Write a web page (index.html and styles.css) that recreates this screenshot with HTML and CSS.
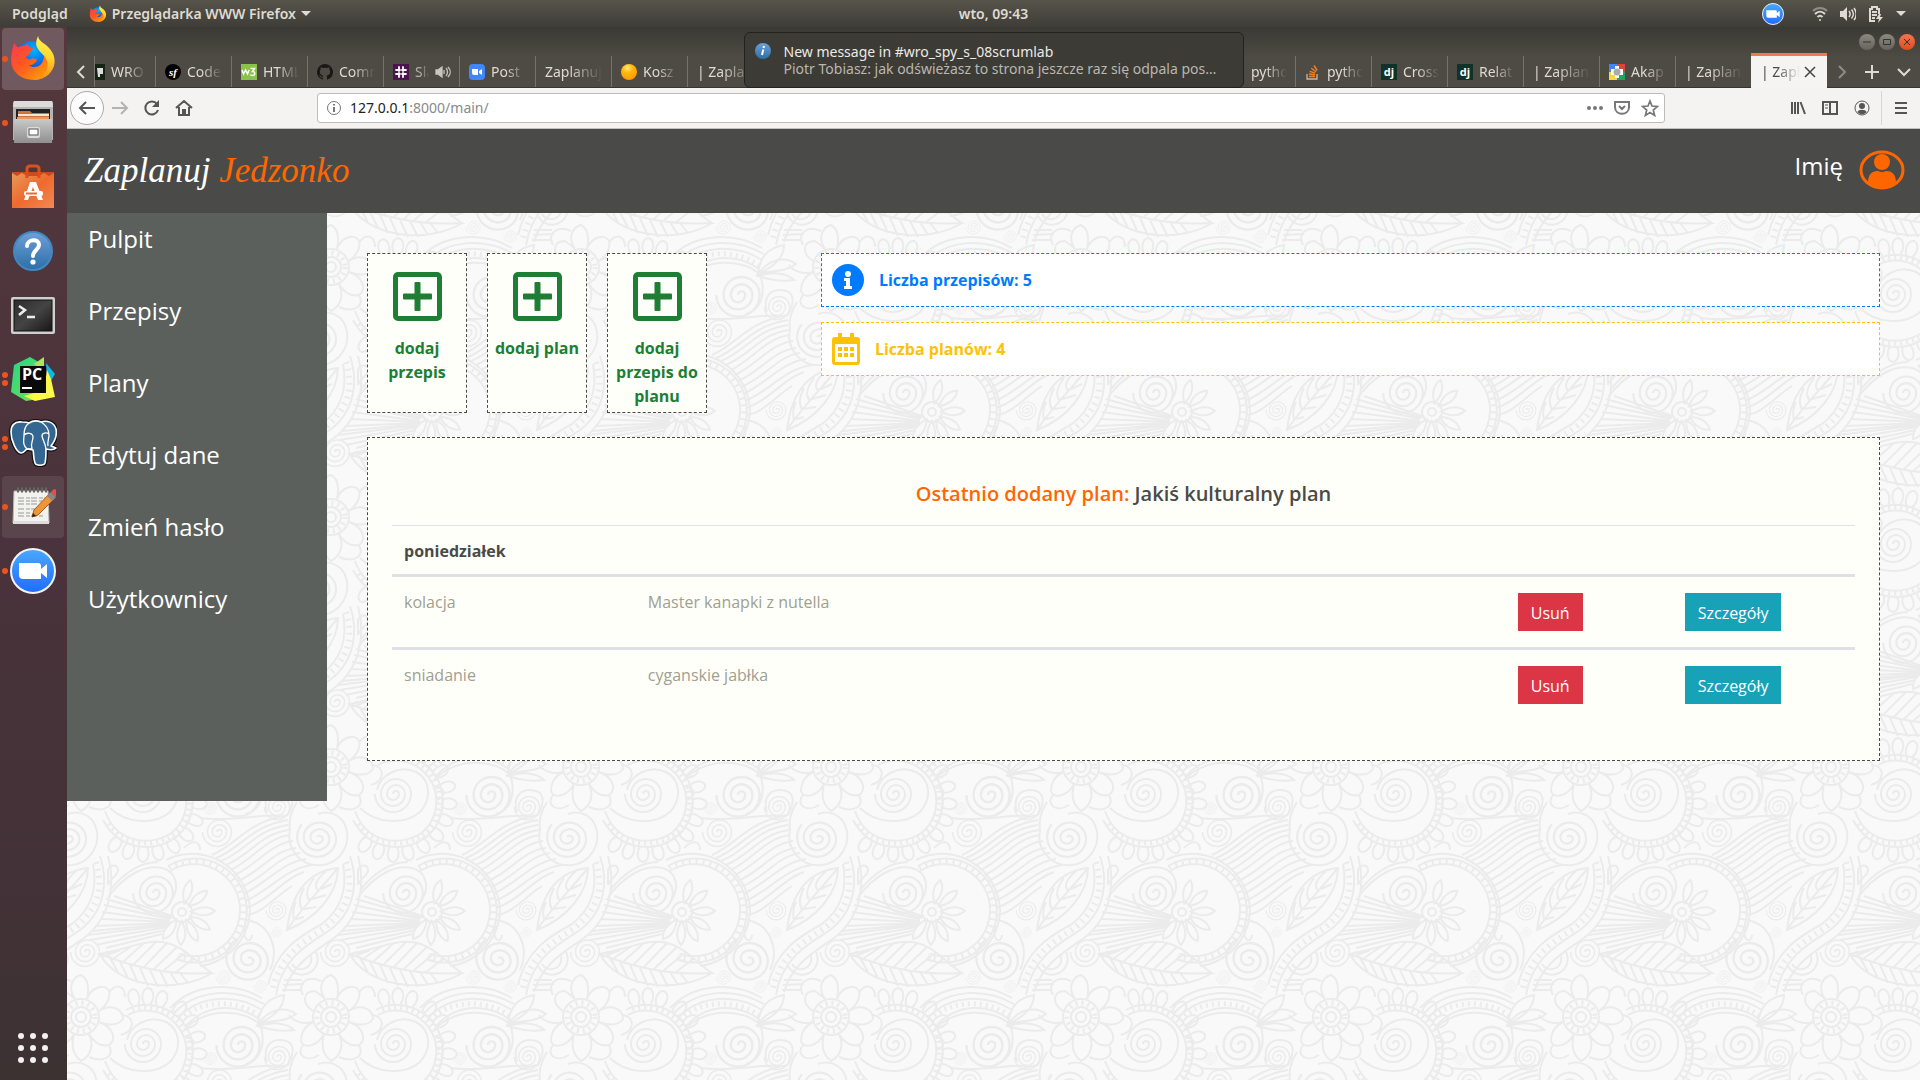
FILE: index.html
```html
<!DOCTYPE html>
<html lang="pl">
<head>
<meta charset="utf-8">
<title>Zaplanuj Jedzonko</title>
<link rel="stylesheet" href="styles.css">
</head>
<body>
<svg class="defs" aria-hidden="true">
  <defs>
    <linearGradient id="g-fox" x1="0" y1="0" x2="1" y2="1"><stop offset="0" stop-color="#ff3750"/><stop offset=".45" stop-color="#ff5a1f"/><stop offset="1" stop-color="#ffb400"/></linearGradient>
    <linearGradient id="g-fox2" x1="0" y1="0" x2="0" y2="1"><stop offset="0" stop-color="#fff44f"/><stop offset=".5" stop-color="#ffd52e"/><stop offset="1" stop-color="#ff8a16"/></linearGradient>
    <radialGradient id="g-globe" cx=".55" cy=".25" r=".8"><stop offset="0" stop-color="#00b4ff"/><stop offset=".5" stop-color="#0a6be8"/><stop offset="1" stop-color="#2a1a8c"/></radialGradient>
    <linearGradient id="g-blue" x1="0" y1="0" x2="0" y2="1"><stop offset="0" stop-color="#4aa8ff"/><stop offset="1" stop-color="#1f6dfb"/></linearGradient>
    <linearGradient id="g-help" x1="0" y1="0" x2="0" y2="1"><stop offset="0" stop-color="#6f9fd8"/><stop offset="1" stop-color="#2c6fa6"/></linearGradient>
    <linearGradient id="g-grey" x1="0" y1="0" x2="0" y2="1"><stop offset="0" stop-color="#c9c9c9"/><stop offset="1" stop-color="#8f8f8f"/></linearGradient>
    <linearGradient id="g-bag" x1="0" y1="0" x2="1" y2="1"><stop offset="0" stop-color="#e79a5c"/><stop offset=".5" stop-color="#ef6a2d"/><stop offset="1" stop-color="#f08a54"/></linearGradient>
    <linearGradient id="g-term" x1="0" y1="0" x2="1" y2="1"><stop offset="0" stop-color="#2c2c2c"/><stop offset=".5" stop-color="#444"/><stop offset="1" stop-color="#161616"/></linearGradient>
    <linearGradient id="g-pc" x1="0" y1="0" x2="1" y2="1"><stop offset="0" stop-color="#21d789"/><stop offset="1" stop-color="#7be04b"/></linearGradient>
    <radialGradient id="g-egg" cx=".4" cy=".25" r=".8"><stop offset="0" stop-color="#ffe97a"/><stop offset=".4" stop-color="#ffb80a"/><stop offset="1" stop-color="#ff9500"/></radialGradient>

    <symbol id="firefox" viewBox="0 0 46 46">
      <circle cx="22" cy="23" r="17" fill="url(#g-globe)"/>
      <path fill="url(#g-fox)" d="M5 7c1 3 2 4 4 5 3-2 6-1 9-4 0 3 2 5 6 5-2 2-4 3-4 5l-4 3c1 2 3 3 5 2 3-1 5 0 6 1-2 3-4 5-8 5 4 3 10 2 13-3 3-6 1-12-2-15 8 2 15 10 12 19-3 9-11 14-20 13C10 42 2 35 2 24 2 16 4 12 5 7z"/>
      <path fill="url(#g-fox2)" d="M28 1c0 4 4 6 8 9 7 6 9 13 7 20-3 9-11 13-19 13 8-2 14-8 13-16-1-8-10-11-11-18 0-4 1-6 2-8z"/>
    </symbol>
    <symbol id="zoomcam" viewBox="0 0 46 46">
      <circle cx="23" cy="23" r="22" fill="url(#g-blue)" stroke="#f4f4f4" stroke-width="2"/>
      <path fill="#fff" d="M9 15h19a3 3 0 0 1 3 3v13H13a4 4 0 0 1-4-4zM31 21l6-5v14l-6-5z"/>
    </symbol>
    <symbol id="plus-square" viewBox="0 0 49 49">
      <path fill="none" stroke="#1e7e34" stroke-width="5" d="M5 2.500h39a2.500 2.500 0 0 1 2.500 2.500v39a2.500 2.500 0 0 1-2.500 2.500H5A2.500 2.500 0 0 1 2.500 44V5A2.500 2.500 0 0 1 5 2.500z"/>
      <rect x="10" y="21.500" width="29" height="6" rx="1" fill="#1e7e34"/>
      <rect x="21.500" y="10" width="6" height="29" rx="1" fill="#1e7e34"/>
    </symbol>
    <symbol id="dj" viewBox="0 0 16 16"><rect width="16" height="16" fill="#113228"/><text x="8" y="12" text-anchor="middle" class="glyph glyph-dj">dj</text></symbol>

    <path id="spiral" d="M0 0A3 3 0 0 1 6 0A6 6 0 0 1-6 0A9 9 0 0 1 12 0A12 12 0 0 1-12 0A15 15 0 0 1 18 0A18 18 0 0 1-18 0"/>
    <path id="petal" d="M0-9C-5-18-6-26 0-33C6-26 5-18 0-9z"/>
    <path id="lobe" d="M-3-46C-7-52-6-61 0-62C6-61 7-52 3-46"/>
    <g id="floral" fill="none" stroke="#ebebeb" stroke-width="2">
      <!-- flower inside a beaded ring -->
      <path d="M218 86A52 52 0 1 1 226 179M220 91A46 46 0 1 1 230 174M216 80A58 58 0 0 1 300 132A58 58 0 0 1 250 186"/>
      <path stroke-width="6" stroke-dasharray="2 5" d="M219 88A49 49 0 1 1 228 176"/>
      <g transform="translate(232 132)">
        <circle r="4"/><circle r="10"/>
        <use href="#petal" transform="rotate(15)"/><use href="#petal" transform="rotate(50)"/><use href="#petal" transform="rotate(88)"/><use href="#petal" transform="rotate(122)"/><use href="#petal" transform="rotate(152)"/><use href="#petal" transform="rotate(182)"/><use href="#petal" transform="rotate(215)"/>
      </g>
      <!-- shell with beads and lobes -->
      <path d="M155 31C165 60 195 68 220 54A41 41 0 0 0 225-7C210-22 190-22 178-15M153 40C170 72 205 72 225 58A47 47 0 0 0 231-10C214-28 190-28 176-20M160 28C176 44 205 45 220 32C234 16 228-2 216-8C198-16 180-4 177 10"/>
      <path stroke-width="5" stroke-dasharray="2 4" d="M158 44C178 68 205 66 222 56A44 44 0 0 0 228-9C212-25 192-25 180-19"/>
      <g transform="translate(195 20)">
        <use href="#lobe" transform="rotate(-12)"/><use href="#lobe" transform="rotate(3)"/><use href="#lobe" transform="rotate(18)"/><use href="#lobe" transform="rotate(40)"/><use href="#lobe" transform="rotate(58)"/><use href="#lobe" transform="rotate(76)"/><use href="#lobe" transform="rotate(94)"/><use href="#lobe" transform="rotate(112)"/><use href="#lobe" transform="rotate(130)"/><use href="#lobe" transform="rotate(148)"/><use href="#lobe" transform="rotate(166)"/><use href="#lobe" transform="rotate(182)"/><use href="#lobe" transform="rotate(198)"/><use href="#lobe" transform="rotate(214)"/>
      </g>
      <!-- spirals -->
      <use href="#spiral" transform="translate(193 14)"/>
      <use href="#spiral" transform="translate(38 15) scale(1.200)"/>
      <use href="#spiral" transform="translate(77 27) scale(.7)"/>
      <use href="#spiral" transform="translate(117 57) rotate(40) scale(1.100)"/>
      <path d="M90 50A29 29 0 1 0 145 45C140 34 128 30 118 34M88 35C96 20 94 10 80 10C68 10 63 20 67 32M90 50C88 40 92 30 97 22"/>
      <use href="#spiral" transform="translate(17 52) scale(.8)"/>
      <use href="#spiral" transform="translate(203 113) scale(1.100)"/>
      <path d="M158 117C175 95 195 84 212 88C228 92 230 110 220 122M160 110C175 92 190 82 208 82M158 90C160 84 168 84 168 90C168 96 160 98 158 105z"/>
      <use href="#spiral" transform="translate(48 178) rotate(60) scale(1.200)"/>
      <path d="M45 140C70 142 80 170 70 190M46 146C40 160 52 165 52 155"/>
      <use href="#spiral" transform="translate(135 172) scale(.8)"/>
      <use href="#spiral" transform="translate(76 130) scale(.55)"/>
      <use href="#spiral" transform="translate(23 197) scale(.4)"/>
      <use href="#spiral" transform="translate(60 206) scale(.35)"/>
      <use href="#spiral" transform="translate(10 28) scale(.35)"/>
      <use href="#spiral" transform="translate(76 152) scale(.3)"/>
      <!-- flowing stripes -->
      <path d="M12 75C38 64 46 42 88 35M16 78C42 68 50 46 88 40M21 81C48 70 54 50 88 45M26 85C52 74 60 54 89 50M31 90C54 78 66 58 90 55M35 95C58 84 70 64 93 61M38 101C60 92 74 70 96 68M41 107C64 98 78 76 100 73M43 114C66 104 82 82 106 79M45 121C68 112 86 88 112 85M46 128C70 120 84 98 104 92M46 135C62 134 76 116 92 106"/>
      <!-- veined leaf -->
      <path d="M87 150C90 125 100 92 138 88C138 112 118 138 87 150zM87 150C100 130 120 110 138 88M94 140C92 132 94 126 96 122M102 130C98 122 100 116 104 108M110 121C104 114 108 106 114 98M119 111C112 106 118 98 126 91M96 139L104 137M104 129L116 127M112 119L126 115M121 109L132 104"/>
      <!-- beaded stem -->
      <path d="M150 76C158 100 156 130 130 150C108 164 82 178 76 215M158 76C166 106 160 138 134 158C114 172 92 184 84 212M143 84C148 110 140 130 122 144C100 156 76 170 68 205"/>
      <path stroke-width="6" stroke-dasharray="2 5" d="M146 82C154 108 148 128 126 147C104 162 80 174 72 212"/>
      <!-- fan -->
      <path d="M222 138L156 119M220 139L154 125M220 141L152 132M220 142L150 139M220 143L146 146M220 144L142 151M220 145L138 155M218 147L140 160M216 150L146 165M212 154L156 168M222 136L164 116"/>
      <!-- large leaf -->
      <path d="M150 174C180 168 195 160 212 162C235 165 248 185 262 193C220 196 180 186 150 174zM150 174C165 205 225 216 262 193M156 171L164 184M170 170L155 176M182 166L164 178M194 163L174 181M206 162L184 184M217 163L194 187M227 167L204 189M235 173L214 190M243 179L226 192M160 178L168 192M170 182L178 198M180 185L188 203M190 188L198 206M200 190L208 207M210 191L218 207M220 192L228 205M230 193L238 203"/>
      <!-- rosette -->
      <g transform="translate(131 237)">
        <circle r="5"/><circle r="10"/><circle r="18"/><circle r="14" stroke-width="5" stroke-dasharray="2 4"/>
        <path d="M-18-6C-30-14-28-26-16-26C-10-22-8-20-6-18M-6-18C-14-30-8-40 0-42C8-38 8-28 6-18M6-18C10-30 24-34 28-26C30-18 24-10 18-6M18-6C30-14 42-8 42 2C36 10 26 8 18 5M18 5C32 10 36 22 28 28C18 30 12 24 8 17M8 17C14 30 8 40 0 44C-8 38-10 28-7 17M-7 17C-14 30-28 32-30 24C-30 14-24 8-18 5M-18 5C-28 8-38 4-42-2M-28-22C-34-34-24-42-10-36M28-24C34-34 44-32 44-20M42-2C54 0 54 14 40 18M28 28C34 40 22 46 8 40M-28 28C-36 38-24 46-12 38"/>
      </g>
      <!-- arches -->
      <path d="M-30 228C-5 202 35 202 62 218M-26 233C-2 208 36 208 64 224M-22 238C0 214 36 214 62 230M-16 250C5 228 40 228 60 244C66 262 62 280 46 284M-14 246C8 222 40 224 60 240"/>
      <path stroke-width="5" stroke-dasharray="2 4" d="M-20 240C2 218 38 220 60 236"/>
      <path d="M58 244C60 226 68 218 84 215C84 226 76 236 58 244zM58 244C70 228 86 226 96 234C86 242 74 240 58 244zM58 246C70 242 86 242 94 250C82 252 70 250 58 246zM84 200L102 200M83 205L104 204M82 210L102 210M88 186A14 14 0 0 0 116 172M92 184A9 9 0 0 0 110 174"/>
      <path d="M0 38C30 42 60 34 78 36M234 68C242 60 250 60 250 70M-14 8C-4 6-4 18-14 20"/>
    </g>
    <pattern id="paisley" width="250" height="250" patternUnits="userSpaceOnUse" patternTransform="translate(133 151)">
      <use href="#floral" x="-250" y="-250"/><use href="#floral" y="-250"/><use href="#floral" x="-250"/><use href="#floral"/><use href="#floral" x="250"/><use href="#floral" y="250"/>
    </pattern>
  </defs>
</svg>

<header class="topbar">
  <div class="topbar-left">
    <span>Podgląd</span>
    <span class="app-menu"><svg width="18" height="18"><use href="#firefox"/></svg>Przeglądarka WWW Firefox<i class="caret"></i></span>
  </div>
  <time class="clock">wto, 09:43</time>
  <div class="tray">
    <svg class="tray-zoom" width="22" height="22"><use href="#zoomcam"/></svg>
    <svg width="16" height="16" viewBox="0 0 16 16" fill="none" stroke="#dfdbd2" stroke-width="2"><path opacity=".45" d="M1 5c4-4 10-4 14 0"/><path d="M3 8c3-3 7-3 10 0M5.500 11c1.500-1.500 3.500-1.500 5 0"/><circle cx="8" cy="14" r="1" fill="#dfdbd2" stroke="none"/></svg>
    <svg width="16" height="16" viewBox="0 0 16 16" fill="none" stroke="#dfdbd2" stroke-width="1.500"><path fill="#dfdbd2" stroke="none" d="M0 5h3l4-4v14l-4-4H0z"/><path d="M9 5c1.500 2 1.500 4 0 6M11.500 3.500c2.500 3 2.500 6 0 9M14 2c3 4 3 8 0 12"/></svg>
    <svg width="16" height="18" viewBox="0 0 16 18"><path fill="none" stroke="#dfdbd2" stroke-width="2" d="M7 16H2V4h2V2h5v2h2v5M4 7h5M4 10h5M4 13h3"/><path fill="#dfdbd2" d="M11 9l-3 5h3l-1 4 5-6h-3l1-3z"/></svg>
    <i class="caret"></i>
  </div>
</header>

<div class="desktop">
  <nav class="launcher" aria-label="Programy">
    <button class="launch running focused" aria-label="Firefox"><i class="pips"></i><svg width="48" height="48"><use href="#firefox"/></svg></button>
    <button class="launch running" aria-label="Pliki"><i class="pips"></i>
      <svg width="46" height="46" viewBox="0 0 46 46"><path fill="#b5b5b5" d="M3 3q0-2 2-2h36q2 0 2 2v37H3z"/><path fill="#dcdcdc" d="M4 1h38l1 6H3z"/><path fill="#222" d="M6 9h34v11H6z"/><path fill="#c9733d" d="M8 11h12l2 2h17v7H8z"/><path fill="#f6e7d5" d="M8 14h31v2H8z"/><path fill="#e89a58" d="M7 17h32v3H7z"/><path fill="url(#g-grey)" d="M4 19h38v24H4z"/><rect x="17" y="27" width="13" height="11" rx="2" fill="#ddd"/><rect x="19" y="29" width="9" height="6" fill="#fff" stroke="#555"/></svg></button>
    <button class="launch" aria-label="Oprogramowanie">
      <svg width="46" height="46" viewBox="0 0 46 46"><path fill="#c94b1e" d="M2 8h42v7H2z"/><path fill="url(#g-bag)" d="M2 9l5 3 5-3 5 3h12l5-3 5 3 5-3v35H2z"/><path fill="none" stroke="#d9501f" stroke-width="3" d="M17 14V5q0-3 3-3h6q3 0 3 3v9"/><path fill="#fff" d="M20 18h6l7 18h-5l-5-13-5 13h-4z"/><rect x="14" y="27" width="19" height="5" rx="2" fill="#fff"/><path stroke="#ea6a2f" stroke-width="2" d="M16 29.500h11"/></svg></button>
    <button class="launch" aria-label="Pomoc">
      <svg width="46" height="46" viewBox="0 0 46 46"><circle cx="23" cy="23" r="19" fill="url(#g-help)" stroke="#4187c0" stroke-width="2"/><path fill="none" stroke="#fff" stroke-width="4" stroke-linecap="round" d="M17 18c0-7 12-8 12-1 0 5-6 5-6 11"/><circle cx="23" cy="34" r="2.600" fill="#fff"/></svg></button>
    <button class="launch" aria-label="Terminal">
      <svg width="46" height="46" viewBox="0 0 46 46"><rect x="1" y="5" width="44" height="37" rx="2" fill="#cfcfcf"/><rect x="4" y="8" width="38" height="31" fill="url(#g-term)" stroke="#111"/><path fill="none" stroke="#eee" stroke-width="2.500" d="M9 14l6 4-6 5M17 25h8"/></svg></button>
    <button class="launch running double" aria-label="PyCharm"><i class="pips"></i><i class="pips"></i>
      <svg width="46" height="46" viewBox="0 0 46 46"><path fill="url(#g-pc)" d="M4 9L20 1l12 7 2 34-18 3L1 36z"/><path fill="#a6e85a" d="M24 8L34 1v14z"/><path fill="#0cb8e8" d="M36 7l9 11-7 12z"/><path fill="#fcf84a" d="M37 14l4 9 4 18-20 4-11-5 20-6z"/><path fill="#0a0a0a" d="M10 10h26v27H10z"/><text x="12" y="24" class="glyph glyph-pc">PC</text><path fill="#fff" d="M12 31h10v2H12z"/></svg></button>
    <button class="launch running double" aria-label="PostgreSQL"><i class="pips"></i><i class="pips"></i>
      <svg width="48" height="48" viewBox="0 0 48 48" stroke-linejoin="round">
        <path id="elephant" fill="#336791" stroke="#111" stroke-width="4" d="M13 3C5 2 2 7 2 13c0 8 5 20 10 21 3 0 4-3 6-4l6 1c1 3 0 8 2 13 1 3 9 3 10 0 1-4 1-9 1-14 4 1 8 1 10-1l-5-2c4-5 6-12 5-17C45 3 38 1 32 3c-5-2-9-1-12 1-2-1-4-1-7-1z"/>
        <path fill="#336791" stroke="#fff" stroke-width="1.600" d="M13 3C5 2 2 7 2 13c0 8 5 20 10 21 3 0 4-3 6-4l6 1c1 3 0 8 2 13 1 3 9 3 10 0 1-4 1-9 1-14 4 1 8 1 10-1l-5-2c4-5 6-12 5-17C45 3 38 1 32 3c-5-2-9-1-12 1-2-1-4-1-7-1z"/>
        <path fill="none" stroke="#fff" stroke-width="1.300" d="M20 4c-4 3-5 8-5 12 0 5-2 9 3 14M15 16c3-3 9-2 9 2 0 5-3 6-1 12h-6M32 3c5 3 8 8 8 13 0 4-2 7-1 11M40 15c-3-2-7-1-7 2 1 5 3 6 4 13"/></svg></button>
    <button class="launch running selected" aria-label="Edytor tekstu"><i class="pips"></i>
      <svg width="46" height="46" viewBox="0 0 46 46"><path fill="#f2f2ef" stroke="#b9b9b4" d="M4 7h34l1 32H3z"/><path fill="#ddd" d="M3 37h36v3H3z"/><path stroke="#666" stroke-width="5" stroke-dasharray="2 2" d="M7 6h30"/><path stroke="#999" stroke-dasharray="6 2 4 1" d="M8 14h27M8 17h24M8 20h20M8 25h22M8 29h13M8 32h25"/><path fill="#f0943a" stroke="#a85d1c" d="M22 33l2-7L40 9l5 5-17 17z"/><path fill="#888" d="M37 12l4-4 5 5-4 4z"/><path fill="#e05050" d="M41 8l3-3q5 1 4 6l-3 2z"/><path fill="#222" d="M22 33l1-4 3 3z"/></svg></button>
    <button class="launch running" aria-label="Zoom"><i class="pips"></i><svg width="46" height="46"><use href="#zoomcam"/></svg></button>
    <button class="launch apps" aria-label="Pokaż programy">
      <svg width="30" height="30" viewBox="0 0 30 30" fill="#f2f1f0"><circle cx="3" cy="3" r="3"/><circle cx="15" cy="3" r="3"/><circle cx="27" cy="3" r="3"/><circle cx="3" cy="15" r="3"/><circle cx="15" cy="15" r="3"/><circle cx="27" cy="15" r="3"/><circle cx="3" cy="27" r="3"/><circle cx="15" cy="27" r="3"/><circle cx="27" cy="27" r="3"/></svg></button>
  </nav>

  <div class="window">
    <div class="titlebar">
      <button class="wm" aria-label="Minimalizuj"><svg width="16" height="16"><path d="M4 8h8"/></svg></button>
      <button class="wm" aria-label="Przywróć"><svg width="16" height="16"><path d="M4.500 5.500h7v5h-7z"/></svg></button>
      <button class="wm wm-close" aria-label="Zamknij"><svg width="16" height="16"><path d="M5 5l6 6M11 5l-6 6"/></svg></button>
    </div>
    <div class="tabstrip">
      <button class="strip-btn" aria-label="W lewo"><svg width="16" height="16" viewBox="0 0 16 16"><path d="M11 2L5 8l6 6"/></svg></button>
      <button class="tab tab-cut"><svg width="10" height="16" viewBox="0 0 10 16"><path fill="#152515" d="M0 0h10v16H0z"/><path fill="#ddd" d="M2 4h6v6H5v3H3z"/></svg><span>WRO</span></button>
      <button class="tab"><svg width="16" height="16" viewBox="0 0 16 16"><circle cx="8" cy="8" r="8" fill="#000"/><text x="8" y="12" text-anchor="middle" class="glyph glyph-sf">sf</text></svg><span>Code</span></button>
      <button class="tab"><svg width="16" height="16" viewBox="0 0 16 16"><rect width="16" height="16" fill="#8bc34a"/><path fill="none" stroke="#fff" stroke-width="1.500" d="M1 6l1.500 4 2-4 2 4L8 6M9.500 4.500h4l-2 3c3 0 3 4 0 4-1 0-2-.5-2-1"/></svg><span>HTML</span></button>
      <button class="tab"><svg width="16" height="16" viewBox="0 0 16 16"><path fill="#191717" d="M8 0a8 8 0 0 0-2.500 15.600c.4 0 .5-.2.500-.4v-1.500c-2.200.5-2.700-1-2.700-1-.4-.9-.9-1.200-.9-1.200-.7-.5 0-.5 0-.5.8.1 1.200.8 1.200.8.8 1.300 2 .9 2.400.7 0-.5.300-.9.500-1.100-1.800-.2-3.600-.9-3.600-4 0-.8.300-1.600.8-2.100 0-.2-.3-1 .1-2.100 0 0 .7-.2 2.200.8a7 7 0 0 1 4 0c1.500-1 2.200-.8 2.200-.8.4 1.100.1 1.900.1 2.100.5.500.8 1.300.8 2.100 0 3.100-1.900 3.800-3.700 4 .3.300.6.800.6 1.500v2.300c0 .2.100.4.500.4A8 8 0 0 0 8 0z"/></svg><span>Comm</span></button>
      <button class="tab"><svg width="16" height="16" viewBox="0 0 16 16"><rect width="16" height="16" fill="#4a154b"/><path stroke="#fff" stroke-width="1.800" stroke-linecap="round" d="M6 3v4M3 6h4M10 3v4M9 6h4M6 9v4M3 10h4M10 9v4M9 10h4"/></svg><span class="dim">Sla</span><svg width="16" height="16" viewBox="0 0 16 16" fill="none" stroke="#c8c6c0" stroke-width="1.300"><path fill="#c8c6c0" d="M1 6h2l4-3v10l-4-3H1z"/><path d="M9 6v4M11 4c2 2 2 6 0 8M13 3c3 3 3 7 0 10"/></svg></button>
      <button class="tab"><svg width="16" height="16" viewBox="0 0 16 16"><rect width="16" height="16" rx="4" fill="#4087fc"/><path fill="#fff" d="M3 5h6v6H5q-2 0-2-2zM10 7l3-2v6l-3-2z"/></svg><span>Post</span></button>
      <button class="tab"><span>Zaplanuj</span></button>
      <button class="tab"><svg width="16" height="16" viewBox="0 0 16 16"><circle cx="8" cy="8" r="8" fill="url(#g-egg)"/></svg><span>Kosz</span></button>
      <button class="tab"><span>| Zaplanuj</span></button>
      <div class="tab-gap"></div>
      <button class="tab tab-text"><span>pytho</span></button>
      <button class="tab"><svg width="16" height="16" viewBox="0 0 16 16" fill="none"><path stroke="#bcbbbb" stroke-width="1.300" d="M2 10v5h10v-5"/><path stroke="#f48024" stroke-width="1.400" d="M4 12.500h6M4 10l6 .8M4.700 7.300l5.600 1.900M6.300 4.200l4.800 3.500M9 1.500l3.200 5"/></svg><span>pytho</span></button>
      <button class="tab"><svg width="16" height="16"><use href="#dj"/></svg><span>Cross</span></button>
      <button class="tab"><svg width="16" height="16"><use href="#dj"/></svg><span>Relat</span></button>
      <button class="tab"><span>| Zaplanuj</span></button>
      <button class="tab"><svg width="16" height="16" viewBox="0 0 16 16"><path fill="#4285f4" d="M0 0h8v8H0z"/><path fill="#db4437" d="M8 0h8v8H8z"/><path fill="#f4d93b" d="M0 8h8v8H0z"/><path fill="#1fa463" d="M8 8h8v8H8z"/><path fill="#fff" d="M6 2h4v3h4v6h-4v3H6v-3H2V5h4z"/><circle cx="8" cy="8" r="3.500" fill="#aaa"/></svg><span>Akap</span></button>
      <button class="tab"><span>| Zaplanuj</span></button>
      <button class="tab tab-active"><span>| Zapla</span><svg width="16" height="16" viewBox="0 0 16 16"><path stroke="#4a4a4a" stroke-width="1.600" d="M3 3l10 10M13 3L3 13"/></svg></button>
      <button class="strip-btn faint" aria-label="W prawo"><svg width="16" height="16" viewBox="0 0 16 16"><path d="M5 2l6 6-6 6"/></svg></button>
      <button class="strip-btn" aria-label="Nowa karta"><svg width="16" height="16" viewBox="0 0 16 16"><path d="M8 1v14M1 8h14"/></svg></button>
      <button class="strip-btn" aria-label="Lista kart"><svg width="16" height="16" viewBox="0 0 16 16"><path d="M2 5l6 6 6-6"/></svg></button>
    </div>
    <div class="navbar">
      <div class="nav-left">
        <button class="nav-btn back" aria-label="Wstecz"><svg width="18" height="18" viewBox="0 0 18 18"><path d="M17 9H2M8 3L2 9l6 6"/></svg></button>
        <button class="nav-btn off" aria-label="Naprzód"><svg width="18" height="18" viewBox="0 0 18 18"><path d="M1 9h15M10 3l6 6-6 6"/></svg></button>
        <button class="nav-btn" aria-label="Odśwież"><svg width="18" height="18" viewBox="0 0 18 18"><path d="M14 5a6.500 6.500 0 1 0 1 6"/><path class="solid" d="M16 1v7H9z"/></svg></button>
        <button class="nav-btn" aria-label="Strona domowa"><svg width="18" height="18" viewBox="0 0 18 18"><path d="M1 9l8-7 8 7M4 8v8h10V8M8 16v-5h2v5"/></svg></button>
      </div>
      <div class="urlbar">
        <svg width="16" height="16" viewBox="0 0 16 16" fill="none" stroke="#777"><circle cx="8" cy="8" r="6.500"/><path stroke-width="2" d="M8 7v5M8 4v1.500"/></svg>
        <span class="url" role="textbox" aria-label="Adres" tabindex="0"><b>127.0.0.1</b>:8000/main/</span>
        <svg width="16" height="16" fill="#777"><circle cx="2" cy="8" r="2"/><circle cx="8" cy="8" r="2"/><circle cx="14" cy="8" r="2"/></svg>
        <svg width="16" height="16" viewBox="0 0 16 16" fill="none" stroke="#777" stroke-width="2"><path d="M1 2h14v5c0 9-14 9-14 0zM5 6l3 3 3-3"/></svg>
        <svg width="18" height="18" viewBox="0 0 18 18" fill="none" stroke="#777" stroke-width="1.700"><path d="M9 2l2 5 5.500.4-4.200 3.600 1.300 5.400L9 13.500l-4.600 2.900L5.700 11 1.500 7.400 7 7z"/></svg>
      </div>
      <div class="nav-right">
        <button class="nav-btn" aria-label="Biblioteka"><svg width="18" height="18" viewBox="0 0 18 18"><path d="M3 3v12M6 3v12M9 3v12M11.500 3l4.500 12"/></svg></button>
        <button class="nav-btn" aria-label="Panele"><svg width="18" height="18" viewBox="0 0 18 18"><path d="M2 3h14v12H2zM9 3v12"/><path class="thin" d="M4 6h3M4 9h3"/></svg></button>
        <button class="nav-btn" aria-label="Konto"><svg width="18" height="18" viewBox="0 0 18 18"><circle cx="9" cy="9" r="7" fill="none" stroke-width="1"/><circle class="solid" cx="9" cy="7" r="3"/><path class="solid" d="M4.500 13c1-3 8-3 9 0-2 3-7 3-9 0z"/></svg></button>
        <i class="nav-sep"></i>
        <button class="nav-btn" aria-label="Menu"><svg width="18" height="18" viewBox="0 0 18 18"><path d="M3 4h12M3 9h12M3 14h12"/></svg></button>
      </div>
    </div>

    <aside class="toast" role="status">
      <svg width="16" height="16" viewBox="0 0 16 16"><circle cx="8" cy="8" r="8" fill="url(#g-help)"/><path stroke="#fff" stroke-width="2" d="M9 3l-.5 2M8.300 6.500L7 12"/></svg>
      <div><strong>New message in #wro_spy_s_08scrumlab</strong><p>Piotr Tobiasz: jak odświeżasz to strona jeszcze raz się odpala pos…</p></div>
    </aside>

    <div class="page">
      <svg class="backdrop" aria-hidden="true"><rect width="100%" height="100%" fill="#f9f9f9"/><rect width="100%" height="100%" fill="url(#paisley)"/></svg>
      <header class="site-header">
        <a class="logo" href="#">Zaplanuj <em>Jedzonko</em></a>
        <a class="account" href="#">Imię
          <svg width="46" height="40" viewBox="0 0 46 40"><ellipse cx="23" cy="20" rx="21" ry="18" fill="none" stroke="#f60" stroke-width="3"/><ellipse cx="23" cy="12" rx="8" ry="8" fill="#f60"/><path fill="#f60" d="M9 33c0-10 5-12 10-12q4 2 8 0c6 0 10 3 10 12-8 7-20 7-28 0z"/></svg></a>
      </header>
      <div class="site-body">
        <nav class="sidebar">
          <a href="#">Pulpit</a><a href="#">Przepisy</a><a href="#">Plany</a><a href="#">Edytuj dane</a><a href="#">Zmień hasło</a><a href="#">Użytkownicy</a>
        </nav>
        <main class="content">
          <div class="summary">
            <div class="actions">
              <a class="action" href="#"><svg width="49" height="49"><use href="#plus-square"/></svg>dodaj przepis</a>
              <a class="action" href="#"><svg width="49" height="49"><use href="#plus-square"/></svg>dodaj plan</a>
              <a class="action" href="#"><svg width="49" height="49"><use href="#plus-square"/></svg>dodaj przepis do planu</a>
            </div>
            <div class="counters">
              <div class="counter counter-info"><svg width="32" height="32" viewBox="0 0 32 32"><circle cx="16" cy="16" r="16" fill="#007bff"/><circle cx="16" cy="10" r="3" fill="#fff"/><path fill="#fff" d="M12 14h6v8h2v3h-8v-3h2v-5h-2z"/></svg>Liczba przepisów: 5</div>
              <div class="counter counter-plan"><svg width="28" height="32" viewBox="0 0 28 32"><path fill="#ffc107" fill-rule="evenodd" d="M6 0h4v4h8V0h4v4h3a3 3 0 0 1 3 3v22a3 3 0 0 1-3 3H3a3 3 0 0 1-3-3V7a3 3 0 0 1 3-3h3zM3 11v18h22V11z"/><path fill="#ffc107" d="M6 14h4v4H6zM12 14h4v4h-4zM18 14h4v4h-4zM6 20h4v4H6zM12 20h4v4h-4zM18 20h4v4h-4z"/></svg>Liczba planów: 4</div>
            </div>
          </div>
          <section class="plan">
            <h2><em>Ostatnio dodany plan:</em> Jakiś kulturalny plan</h2>
            <table>
              <colgroup><col class="c-meal"><col class="c-name"><col class="c-del"><col class="c-info"></colgroup>
              <thead><tr><th colspan="4" scope="col">poniedziałek</th></tr></thead>
              <tbody>
                <tr><td>kolacja</td><td>Master kanapki z nutella</td><td class="cell-btn"><button class="btn btn-danger">Usuń</button></td><td class="cell-btn"><button class="btn btn-info">Szczegóły</button></td></tr>
                <tr><td>sniadanie</td><td>cyganskie jabłka</td><td class="cell-btn"><button class="btn btn-danger">Usuń</button></td><td class="cell-btn"><button class="btn btn-info">Szczegóły</button></td></tr>
              </tbody>
            </table>
          </section>
        </main>
      </div>
    </div>
  </div>
</div>
</body>
</html>
```
FILE: styles.css
```css
* { box-sizing: border-box; }
body { margin: 0; min-height: 100vh; display: flex; flex-direction: column; background: #3c3b37; font: 14px/18px "Noto Sans", sans-serif; }
button { border: 0; padding: 0; margin: 0; background: none; font: inherit; color: inherit; }
a { text-decoration: none; color: inherit; }
svg { flex: none; display: block; }
.defs { position: absolute; width: 0; height: 0; }

/* system bar */
.topbar { display: grid; grid-template-columns: 67px 1fr auto 1fr; align-items: center; height: 27px; background: linear-gradient(#57544b, #3f3d38); color: #dfdbd2; font-weight: 600; font-size: 14px; }
.topbar-left { grid-column: 1 / 3; display: flex; gap: 21px; padding-left: 12px; }
.app-menu { display: flex; align-items: center; gap: 5px; }
.caret { border: 5px solid transparent; border-top-color: #dfdbd2; border-bottom: 0; }
.tray { display: flex; align-items: center; justify-content: flex-end; gap: 12px; padding-right: 14px; }
.tray-zoom { margin-right: 16px; }

.desktop { flex: 1; display: flex; }

/* launcher */
.launcher { width: 67px; flex: none; display: flex; flex-direction: column; gap: 2px; padding: 1px 3px 0 2px; background: linear-gradient(#53383d, #4b333c 45%, #433238 80%, #3c3232); }
.launch { position: relative; height: 62px; display: flex; align-items: center; justify-content: center; border-radius: 4px; }
.focused { background: #70595f; }
.selected { background: #5a454c; }
.pips { position: absolute; left: 0; top: 28px; width: 6px; height: 6px; border-radius: 3px; background: #e95420; }
.double .pips { top: 24px; }
.double .pips + .pips { top: 32px; }
.apps { margin-top: auto; margin-bottom: 1px; }

.glyph { fill: #fff; font-family: "Open Sans", sans-serif; font-weight: 700; }
.glyph-dj { font-size: 11px; }
.glyph-sf { font: italic 700 11px "Liberation Serif", serif; }
.glyph-pc { font-size: 16px; }

/* browser chrome */
.window { position: relative; flex: 1; min-width: 0; display: flex; flex-direction: column; }
.titlebar { height: 29px; display: flex; justify-content: flex-end; align-items: center; gap: 4px; padding-right: 5px; background: linear-gradient(#3b3934, #4d4a43); }
.wm { width: 16px; height: 16px; border-radius: 8px; background: linear-gradient(#8b887f, #66645d); }
.wm-close { background: linear-gradient(#f3764d, #de4c1d); }
.wm path { fill: none; stroke: #33322e; }
.tabstrip { height: 32px; display: flex; align-items: stretch; background: #4e4b44; border-bottom: 1px solid #35342f; color: #dfdbd2; }
.strip-btn { flex: 0 0 30px; display: flex; align-items: center; justify-content: center; }
.strip-btn:first-child { flex-basis: 27px; }
.strip-btn:last-child { flex-basis: 33px; }
.strip-btn path { fill: none; stroke: #dfdbd2; stroke-width: 2; }
.faint { opacity: .45; }
.tab { flex: 0 0 76px; display: flex; align-items: center; gap: 6px; padding: 0 8px 0 9px; border-left: 1px solid #76736b; overflow: hidden; text-align: left; }
.tab span { flex: 1; min-width: 0; white-space: nowrap; overflow: hidden; mask-image: linear-gradient(to right, #000 40%, transparent); -webkit-mask-image: linear-gradient(to right, #000 40%, transparent); }
.tab-cut { flex-basis: 61px; padding-left: 0; }
.tab-text { padding-left: 31px; }
.tab-gap { flex: 1; }
.tab .dim { opacity: .7; }
.tab-active { background: #f5f4f2; border-left: 0; border-top: 3px solid #f0794f; color: #4a4a4a; margin: -3px 0 -1px; padding: 0 9px 0 10px; gap: 2px; }
.navbar { height: 41px; display: flex; align-items: center; background: #f4f3f1; border-bottom: 1px solid #c3c1bd; }
.nav-left { width: 250px; display: flex; align-items: center; padding-left: 3px; }
.nav-btn { width: 32px; height: 34px; display: flex; align-items: center; justify-content: center; }
.nav-btn path { fill: none; stroke: #555; stroke-width: 2; }
.nav-btn .thin { stroke-width: 1; }
.nav-btn circle { stroke: #555; }
.nav-btn .solid { fill: #555; stroke: none; }
.back { width: 34px; border: 1px solid #aaa; border-radius: 17px; background: #fcfcfc; }
.off { opacity: .4; }
.urlbar { flex: 1; height: 30px; display: flex; align-items: center; gap: 11px; padding: 0 5px 0 8px; background: #fff; border: 1px solid #bfbdb9; border-radius: 3px; }
.url { flex: 1; margin-left: -3px; color: #8a8a8a; }
.url b { font-weight: 400; color: #222; }
.nav-right { width: 255px; display: flex; align-items: center; justify-content: flex-end; padding-right: 3px; }
.nav-sep { width: 1px; height: 34px; margin: 0 3px; background: #d8d6d3; }

.toast { position: absolute; z-index: 2; top: 5px; left: 0; right: 0; margin: 0 auto; width: 500px; height: 56px; display: flex; gap: 13px; padding: 10px 8px 0 10px; background: #3c3b36; border: 1px solid #23221f; border-radius: 6px; color: #b9b7b0; line-height: 17px; }
.toast div { flex: 1; min-width: 0; white-space: nowrap; overflow: hidden; }
.toast strong { font-weight: 400; color: #eceae5; }
.toast p { margin: 0; }

/* site */
.page { position: relative; flex: 1; isolation: isolate; font-family: "Open Sans", sans-serif; font-size: 16px; line-height: 24px; color: #4a4a47; }
.backdrop { position: absolute; inset: 0; width: 100%; height: 100%; z-index: -1; }
.site-header { height: 84px; display: flex; justify-content: space-between; padding: 0 15px 0 17px; background: #4a4b48; color: #fff; }
.logo { align-self: center; font: italic 35px/48px "Liberation Serif", serif; }
.logo em { color: #f60; }
.account { display: flex; align-items: flex-start; gap: 16px; padding-top: 21px; font-size: 24px; line-height: 32px; }
.site-body { display: flex; align-items: flex-start; }
.sidebar { flex: 0 0 260px; min-height: 588px; background: #5b605d; color: #fff; font-size: 24px; line-height: 36px; display: flex; flex-direction: column; gap: 36px; padding: 8px 21px; }
.content { flex: 1; min-width: 0; padding: 40px; display: flex; flex-direction: column; gap: 24px; }
.summary { display: grid; grid-template-columns: 3fr 7fr; }
.actions { display: flex; gap: 20px; }
.action { width: 100px; min-height: 160px; padding: 18px 4px 0; border: 1px dashed #4a4a47; background: #fffffa; color: #1e7e34; font-weight: 700; text-align: center; }
.action svg { margin: 0 auto 15px; }
.counters { display: flex; flex-direction: column; gap: 15px; }
.counter { height: 54px; display: flex; align-items: center; padding: 0 10px; gap: 15px; background: #fff; border: 1px dashed; font-weight: 700; }
.counter-info { color: #007bff; }
.counter-plan { color: #ffc107; }
.plan { padding: 40px 24px; border: 1px dashed #4a4a47; background: #fffffa; }
.plan h2 { margin: 0; padding-bottom: 15px; font-size: 20px; font-weight: 600; line-height: 32px; text-align: center; }
.plan h2 em { font-style: normal; color: #f60; }
table { width: 100%; table-layout: fixed; border-collapse: separate; border-spacing: 0; }
.c-meal, .c-info { width: 16.666%; }
.c-del { width: 8.333%; }
th { text-align: left; padding: 13px 12px 11px; border-top: 1px solid #dee2e6; }
td { padding: 13px 12px; border-top: 3px solid #dee2e6; vertical-align: top; color: #a0a090; }
.cell-btn { padding: 16px 0; text-align: center; }
.btn { display: inline-block; vertical-align: top; padding: 8px 13px 6px; line-height: 24px; color: #fff; }
.btn-danger { background: #dc3545; }
.btn-info { background: #17a2b8; }
```
